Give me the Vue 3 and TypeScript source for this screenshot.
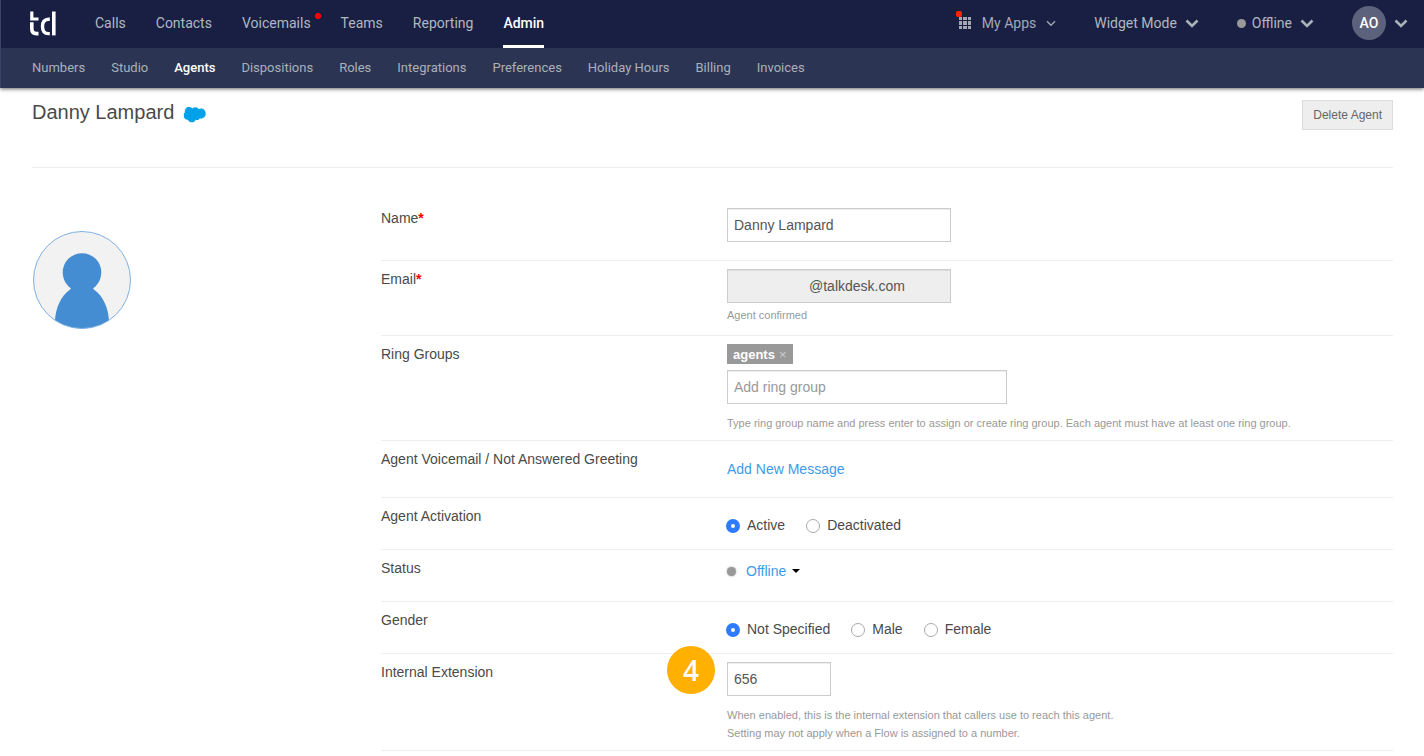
<script setup lang="ts">
import { ref } from 'vue'

interface NavItem {
  label: string
  active?: boolean
  alert?: boolean
}

const mainNav: NavItem[] = [
  { label: 'Calls' },
  { label: 'Contacts' },
  { label: 'Voicemails', alert: true },
  { label: 'Teams' },
  { label: 'Reporting' },
  { label: 'Admin', active: true },
]

const subNav: NavItem[] = [
  { label: 'Numbers' },
  { label: 'Studio' },
  { label: 'Agents', active: true },
  { label: 'Dispositions' },
  { label: 'Roles' },
  { label: 'Integrations' },
  { label: 'Preferences' },
  { label: 'Holiday Hours' },
  { label: 'Billing' },
  { label: 'Invoices' },
]

const activationOptions = ['Active', 'Deactivated']
const genderOptions = ['Not Specified', 'Male', 'Female']

const name = ref('Danny Lampard')
const email = ref('@talkdesk.com')
const newGroup = ref('')
const groups = ref<string[]>(['agents'])
const activation = ref('Active')
const gender = ref('Not Specified')
const extension = ref('656')

function removeGroup(group: string): void {
  groups.value = groups.value.filter((g) => g !== group)
}

function addGroup(): void {
  const value = newGroup.value.trim()
  if (value && !groups.value.includes(value)) groups.value.push(value)
  newGroup.value = ''
}
</script>

<template>
  <div class="page">
    <header class="header">
      <div class="topbar">
        <a class="logo" href="#" aria-label="Home">
          <svg width="28" height="26" viewBox="0 0 28 26" fill="none" stroke="#fff" stroke-width="3.6">
            <path d="M2.800 0.500V8H9.500" stroke-width="3.200" />
            <path d="M2.800 11.200V17.500Q2.800 22.600 7.500 22.600H9.500" />
            <path d="M20.800 8.200H19.500C15.500 8.200 13.500 11 13.500 15.400S15.500 22.600 19.500 22.600H20.800" stroke-width="3.400" />
            <path d="M24.800 0.500V24.400" />
          </svg>
        </a>
        <nav class="main-nav" aria-label="Main">
          <a
            v-for="item in mainNav"
            :key="item.label"
            href="#"
            class="main-link"
            :class="{ active: item.active }"
          >{{ item.label }}<span v-if="item.alert" class="alert"></span></a>
        </nav>
        <div class="tools">
          <button type="button" class="tool apps">
            <svg class="grid-icon" width="14" height="20" viewBox="0 0 14 20">
              <g fill="#a3a8b4">
                <rect x="1" y="4" width="3" height="3" /><rect x="5" y="4" width="4" height="3" /><rect x="10" y="4" width="3" height="3" />
                <rect x="1" y="8" width="3" height="4" /><rect x="5" y="8" width="4" height="4" /><rect x="10" y="8" width="3" height="4" />
                <rect x="1" y="13" width="3" height="3" /><rect x="5" y="13" width="4" height="3" /><rect x="10" y="13" width="3" height="3" />
              </g>
            </svg>
            <span class="apps-alert"></span>
            <span>My Apps</span>
            <svg class="thin" width="10" height="7" viewBox="0 0 10 7" fill="none" stroke="#a3a8b4" stroke-width="1.4">
              <path d="M1 1.2L5 5.2L9 1.2" />
            </svg>
          </button>
          <button type="button" class="tool widget">
            <span>Widget Mode</span>
            <svg class="thick" width="14" height="10" viewBox="0 0 14 10" fill="none" stroke="#a9b1b9" stroke-width="2.6">
              <path d="M1.5 1.5L7 7L12.5 1.5" />
            </svg>
          </button>
          <button type="button" class="tool presence">
            <span class="presence-dot"></span>
            <span>Offline</span>
            <svg class="thick" width="14" height="10" viewBox="0 0 14 10" fill="none" stroke="#a9b1b9" stroke-width="2.6">
              <path d="M1.5 1.5L7 7L12.5 1.5" />
            </svg>
          </button>
          <button type="button" class="tool account" aria-label="Account">
            <span class="initials">AO</span>
            <svg class="thick" width="14" height="10" viewBox="0 0 14 10" fill="none" stroke="#a9b1b9" stroke-width="2.6">
              <path d="M1.5 1.5L7 7L12.5 1.5" />
            </svg>
          </button>
        </div>
      </div>
      <nav class="sub-nav" aria-label="Admin">
        <a
          v-for="item in subNav"
          :key="item.label"
          href="#"
          class="sub-link"
          :class="{ active: item.active }"
        >{{ item.label }}</a>
      </nav>
    </header>

    <main class="content">
      <div class="title-bar">
        <div class="title">
          <h1>Danny Lampard</h1>
          <svg class="cloud" width="23" height="17" viewBox="0 0 23 17" fill="#00a1e8">
            <path d="M1.800 6.500C1.500 3 3.500 1 6 1C7.500 1 8.800 1.600 9.600 2.500C10.400 1.600 11.500 1.200 12.600 1.300C14 1.400 14.900 2 15.500 3C19.500 1.300 22.700 3.800 22.700 7.500C22.700 11.300 19.600 13 16.700 12.400C15.800 13.900 14.200 14.300 12.700 13.700C11.800 15.700 10 16.600 8.200 16.300C6.500 16 5.500 15 5 13.700C2.500 13.900 1 12.300 0.800 10C0.700 8.500 1 7.300 1.800 6.500Z" />
          </svg>
        </div>
        <button type="button" class="delete">Delete Agent</button>
      </div>

      <div class="body">
        <aside class="side">
          <svg class="avatar" width="100" height="100" viewBox="0 0 100 100" role="img" aria-label="Agent photo">
            <clipPath id="avatar-clip"><circle cx="50" cy="50" r="48.500" /></clipPath>
            <circle cx="50" cy="50" r="48.500" fill="#f2f2f2" />
            <g clip-path="url(#avatar-clip)" fill="#458dd3">
              <circle cx="50" cy="42.500" r="19.300" />
              <path d="M39.500 57C38.500 58.500 39 59 37.500 60C29 66 23.500 78 23 91V100H77V91C76.500 78 71 66 62.500 60C61 59 61.500 58.500 60.500 57Z" />
            </g>
            <circle cx="50" cy="50" r="48.500" fill="none" stroke="#7fb1e4" stroke-width="1" />
          </svg>
        </aside>

        <form class="form" @submit.prevent>
          <div class="row">
            <label class="label" for="name">Name<span class="required">*</span></label>
            <div class="value named">
              <input id="name" v-model="name" class="field medium" type="text" />
            </div>
          </div>

          <div class="row">
            <label class="label" for="email">Email<span class="required">*</span></label>
            <div class="value">
              <input id="email" v-model="email" class="field medium locked" type="text" disabled />
              <p class="help close">Agent confirmed</p>
            </div>
          </div>

          <div class="row">
            <label class="label" for="group">Ring Groups</label>
            <div class="value">
              <div class="tags">
                <span v-for="group in groups" :key="group" class="tag">
                  {{ group }}
                  <button type="button" class="remove" :aria-label="'Remove ' + group" @click="removeGroup(group)">×</button>
                </span>
              </div>
              <input
                id="group"
                v-model="newGroup"
                class="field wide"
                type="text"
                placeholder="Add ring group"
                @keydown.enter.prevent="addGroup"
              />
              <p class="help">Type ring group name and press enter to assign or create ring group. Each agent must have at least one ring group.</p>
            </div>
          </div>

          <div class="row">
            <span class="label">Agent Voicemail / Not Answered Greeting</span>
            <div class="value message">
              <a href="#" class="link">Add New Message</a>
            </div>
          </div>

          <div class="row">
            <span id="activation-label" class="label">Agent Activation</span>
            <div class="value radios" role="radiogroup" aria-labelledby="activation-label">
              <label v-for="option in activationOptions" :key="option" class="radio">
                <input v-model="activation" type="radio" name="activation" :value="option" />{{ option }}
              </label>
            </div>
          </div>

          <div class="row">
            <span class="label">Status</span>
            <div class="value status">
              <span class="status-dot"></span>
              <button type="button" class="status-button">Offline<span class="caret"></span></button>
            </div>
          </div>

          <div class="row">
            <span id="gender-label" class="label">Gender</span>
            <div class="value radios" role="radiogroup" aria-labelledby="gender-label">
              <label v-for="option in genderOptions" :key="option" class="radio">
                <input v-model="gender" type="radio" name="gender" :value="option" />{{ option }}
              </label>
            </div>
          </div>

          <div class="row">
            <label class="label" for="extension">Internal Extension</label>
            <div class="value">
              <span class="step">4</span>
              <input id="extension" v-model="extension" class="field short" type="text" />
              <p class="help">When enabled, this is the internal extension that callers use to reach this agent.<br />Setting may not apply when a Flow is assigned to a number.</p>
            </div>
          </div>
        </form>
      </div>
    </main>
  </div>
</template>

<style>
body {
  background: #fff;
}
</style>

<style scoped>
.page {
  color: #4a4a4a;
  font: 14px/20px "Liberation Sans", Arial, sans-serif;
}

.page *,
.page *::before,
.page *::after {
  box-sizing: border-box;
}

a {
  text-decoration: none;
}

button {
  padding: 0;
  border: 0;
  background: none;
  color: inherit;
  font: inherit;
  cursor: pointer;
}

.header {
  position: relative;
  font-family: Roboto, sans-serif;
  border-left: 1px solid #3a4363;
  background: #2c3454;
  box-shadow: 0 1px 4px rgba(0, 0, 0, 0.6);
}

.topbar {
  display: flex;
  align-items: stretch;
  height: 48px;
  padding: 0 16px 0 28px;
  background: #181f43;
}

.logo {
  display: flex;
  align-items: center;
  width: 66px;
}

.main-nav {
  display: flex;
  gap: 30px;
}

.main-link {
  position: relative;
  color: #b1b8c0;
  line-height: 46px;
}

.main-link.active {
  color: #fff;
  font-weight: 500;
  border-bottom: 3px solid #fff;
}

.alert {
  position: absolute;
  top: 13px;
  right: -10px;
  width: 6px;
  height: 6px;
  border-radius: 50%;
  background: #f00;
}

.tools {
  display: flex;
  align-items: center;
  margin-left: auto;
  padding-bottom: 2px;
  color: #b1b8c0;
}

.tool {
  position: relative;
  display: flex;
  align-items: center;
  line-height: 20px;
}

.apps {
  color: #a3a8b4;
}

.grid-icon {
  margin-right: 10px;
}

.apps-alert {
  position: absolute;
  top: -2px;
  left: -2px;
  width: 6px;
  height: 6px;
  border-radius: 2px;
  background: #f20;
}

.thin {
  margin-left: 10px;
}

.thick {
  margin-top: 2px;
}

.widget {
  gap: 8px;
  margin-left: 38px;
}

.presence {
  gap: 8px;
  margin-left: 38px;
}

.presence-dot {
  width: 9px;
  height: 9px;
  margin-right: -2px;
  border-radius: 50%;
  background: #999;
}

.account {
  gap: 8px;
  margin-left: 38px;
}

.initials {
  width: 34px;
  height: 34px;
  border-radius: 50%;
  background: #5d627c;
  color: #fff;
  font-weight: 500;
  line-height: 34px;
  text-align: center;
}

.sub-nav {
  display: flex;
  gap: 26px;
  height: 40px;
  padding: 0 31px;
}

.sub-link {
  color: #a9b1b9;
  font-size: 13px;
  line-height: 40px;
}

.sub-link.active {
  color: #fff;
  font-weight: 500;
}

.content {
  padding: 0 31px 5px 32px;
}

.title-bar {
  display: flex;
  align-items: flex-start;
  justify-content: space-between;
  height: 80px;
  padding-top: 12px;
  border-bottom: 1px solid #eee;
}

.title {
  display: flex;
  align-items: center;
  gap: 9px;
}

h1 {
  margin: 0;
  font-size: 20px;
  font-weight: 400;
  line-height: 24px;
}

.cloud {
  margin-top: 4px;
}

.delete {
  height: 30px;
  padding: 0 10px;
  border: 1px solid #ddd;
  background: #eee;
  color: #666;
  font-size: 12px;
}

.body {
  display: grid;
  grid-template-columns: 349fr 1012fr;
  padding-top: 32px;
}

.side {
  padding-top: 30px;
}

.avatar {
  display: block;
}

.row {
  display: grid;
  grid-template-columns: 346fr 666fr;
  padding: 8px 0;
  border-bottom: 1px solid #eee;
}

.required {
  color: #f00;
  font-weight: 700;
}

.value {
  position: relative;
}

.named {
  padding-bottom: 10px;
}

.field {
  display: block;
  height: 34px;
  margin: 0;
  padding: 0 6px;
  border: 1px solid #ccc;
  border-radius: 0;
  background: #fff;
  box-shadow: inset 0 1px 1px rgba(0, 0, 0, 0.075);
  color: #555;
  font: inherit;
}

.field::placeholder {
  color: #999;
  opacity: 1;
}

.medium {
  width: 224px;
}

.wide {
  width: 280px;
}

.short {
  width: 104px;
}

.locked {
  padding-left: 81px;
  background: #eee;
}

.help {
  margin: 10px 0 0;
  color: #999;
  font-size: 11px;
  line-height: 18px;
}

.help.close {
  margin: 3px 0;
}

.tags {
  display: flex;
  gap: 6px;
  margin-bottom: 6px;
}

.tag {
  display: flex;
  gap: 4px;
  height: 20px;
  padding: 0 6px;
  background: #999;
  color: #fff;
  font-size: 13px;
  font-weight: 700;
  line-height: 22px;
}

.remove {
  color: #ccc;
  font-weight: 400;
  line-height: 22px;
}

.message {
  padding: 10px 0;
}

.link {
  display: inline-block;
  color: #3d9be9;
  vertical-align: top;
}

.radios {
  display: flex;
  gap: 22px;
  padding: 9px 0 6px;
}

.radio {
  display: flex;
  align-items: center;
}

.radio input {
  appearance: none;
  width: 14px;
  height: 14px;
  margin: 2px 7px 0 -1px;
  border: 1px solid #aaa;
  border-radius: 50%;
  background: #fff;
}

.radio input:checked {
  border: 5px solid #2f7bff;
}

.status {
  display: flex;
  align-items: center;
  padding: 3px 0 12px;
}

.status-dot {
  width: 9px;
  height: 9px;
  margin-right: 10px;
  border-radius: 50%;
  background: #999;
  box-shadow: 0 0 2px #999;
}

.status-button {
  display: flex;
  align-items: center;
  color: #3d9be9;
}

.caret {
  margin-left: 6px;
  border: 4px solid transparent;
  border-top-color: #000;
  border-bottom: 0;
}

.step {
  position: absolute;
  top: -16px;
  left: -60px;
  width: 48px;
  height: 48px;
  border-radius: 50%;
  background: #ffb000;
  color: #fff;
  font: 600 28px/48px "Open Sans", "Noto Sans", sans-serif;
  text-align: center;
}
</style>
